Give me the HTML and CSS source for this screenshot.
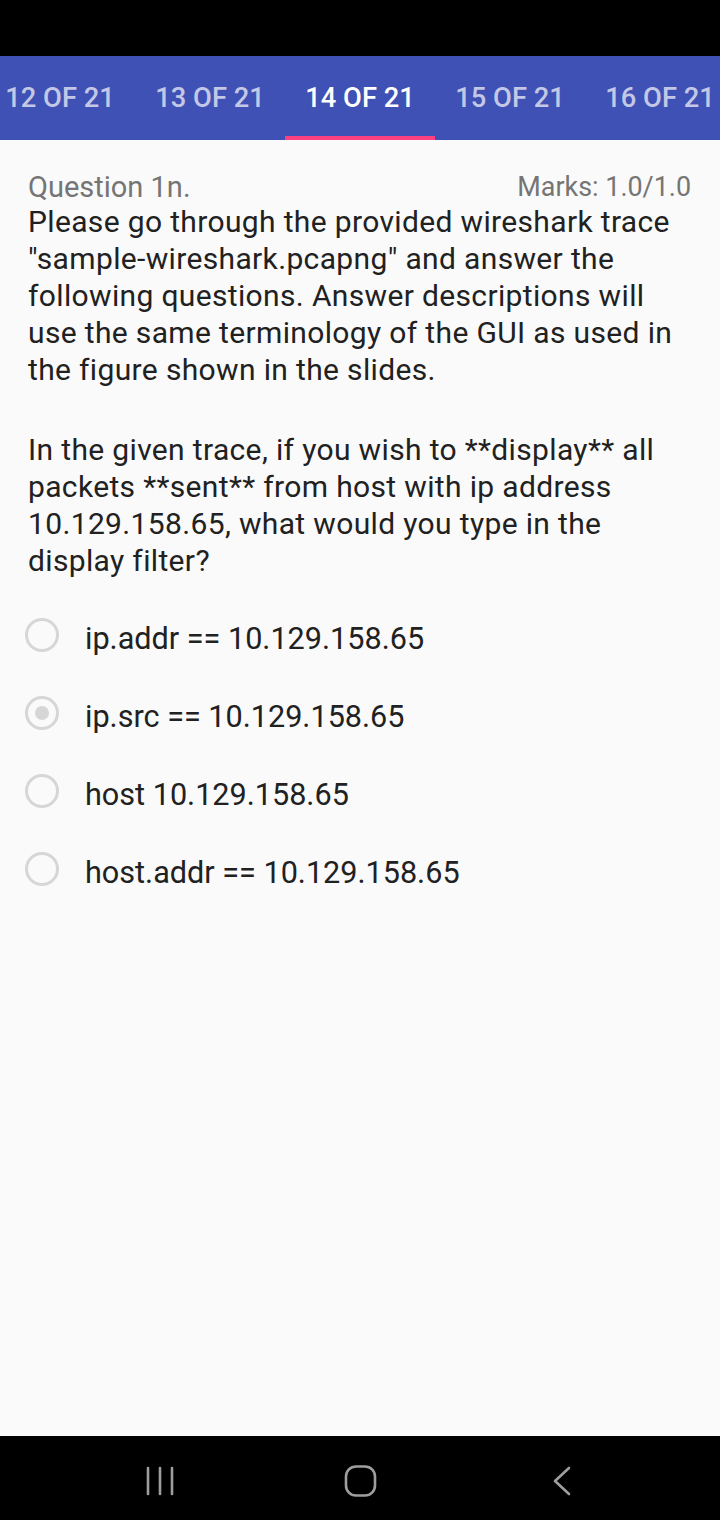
FILE: index.html
```html
<!DOCTYPE html>
<html>
<head>
<meta charset="utf-8">
<link rel="stylesheet" href="styles.css">
</head>
<body>
<div class="screen">
  <div class="status"></div>
  <div class="tabbar">
    <div class="tabs">
      <div class="tab">12 OF 21</div>
      <div class="tab">13 OF 21</div>
      <div class="tab active">14 OF 21</div>
      <div class="tab">15 OF 21</div>
      <div class="tab">16 OF 21</div>
    </div>
  </div>
  <main class="content">
    <div class="qhead">
      <span class="qnum">Question 1n.</span>
      <span class="marks">Marks: 1.0/1.0</span>
    </div>
    <p class="qtext">Please go through the provided wireshark trace "sample-wireshark.pcapng" and answer the following questions. Answer descriptions will use the same terminology of the GUI as used in the figure shown in the slides.</p>
    <p class="qtext para2">In the given trace, if you wish to **display** all packets **sent** from host with ip address 10.129.158.65, what would you type in the display filter?</p>
    <div class="options">
      <div class="option"><span class="radio"></span><span class="label">ip.addr == 10.129.158.65</span></div>
      <div class="option"><span class="radio checked"></span><span class="label">ip.src == 10.129.158.65</span></div>
      <div class="option"><span class="radio"></span><span class="label">host 10.129.158.65</span></div>
      <div class="option"><span class="radio"></span><span class="label">host.addr == 10.129.158.65</span></div>
    </div>
  </main>
  <nav class="navbar">
    <svg class="nav-icon" width="40" height="40" viewBox="0 0 40 40"><g stroke="#9e9e9e" stroke-width="2.6" stroke-linecap="round"><line x1="8" y1="7" x2="8" y2="33"/><line x1="20" y1="7" x2="20" y2="33"/><line x1="32" y1="7" x2="32" y2="33"/></g></svg>
    <svg class="nav-icon" width="40" height="40" viewBox="0 0 40 40"><rect x="5" y="5.5" width="29" height="29" rx="10" fill="none" stroke="#9e9e9e" stroke-width="2.6"/></svg>
    <svg class="nav-icon" width="40" height="40" viewBox="0 0 40 40"><polyline points="27,7 13,20 27,33" fill="none" stroke="#9e9e9e" stroke-width="2.6" stroke-linecap="round" stroke-linejoin="round"/></svg>
  </nav>
</div>
</body>
</html>
```

FILE: styles.css
```css
* { box-sizing: border-box; }
html, body { margin: 0; padding: 0; }
body {
  width: 720px;
  height: 1520px;
  font-family: Roboto, "Noto Sans", sans-serif;
  background: #fafafa;
  overflow: hidden;
}
.screen {
  display: flex;
  flex-direction: column;
  height: 1520px;
}
.status {
  height: 56px;
  background: #000;
  flex-shrink: 0;
}
.tabbar {
  height: 84px;
  background: #3f51b5;
  overflow: hidden;
  flex-shrink: 0;
}
.tabs {
  display: flex;
  margin-left: -15px;
  height: 100%;
}
.tab {
  flex: 0 0 150px;
  height: 100%;
  display: flex;
  align-items: center;
  justify-content: center;
  padding-top: 4px;
  color: rgba(255,255,255,0.7);
  font-size: 27.3px;
  font-weight: 500;
  border-bottom: 4px solid transparent;
}
.tab.active {
  color: #fff;
  border-bottom-color: #ff4081;
}
.content {
  flex: 1;
  padding: 30px 29px 0 28px;
}
.qhead {
  display: flex;
  justify-content: space-between;
  align-items: center;
  height: 33px;
  color: #757575;
}
.qnum { font-size: 29px; }
.marks { font-size: 26.9px; }
.qtext {
  margin: 0;
  font-size: 30px;
  letter-spacing: 0.35px;
  line-height: 37px;
  color: #212121;
}
.para2 {
  margin-top: 43px;
}
.options {
  margin-top: 17px;
  display: flex;
  flex-direction: column;
}
.option {
  height: 78px;
  display: flex;
  align-items: center;
  margin-left: -3px;
}
.radio {
  width: 34px;
  height: 34px;
  border-radius: 50%;
  border: 3px solid #d6d6d6;
  display: flex;
  align-items: center;
  justify-content: center;
  flex-shrink: 0;
}
.radio.checked::after {
  content: "";
  width: 14px;
  height: 14px;
  border-radius: 50%;
  background: #d6d6d6;
}
.label {
  margin-left: 26px;
  font-size: 30.6px;
  color: #212121;
  padding-top: 7px;
}
.navbar {
  height: 84px;
  background: #000;
  flex-shrink: 0;
  display: flex;
  align-items: center;
  justify-content: space-between;
  padding: 6px 138px 0 140px;
}
.nav-icon { display: block; }
```
